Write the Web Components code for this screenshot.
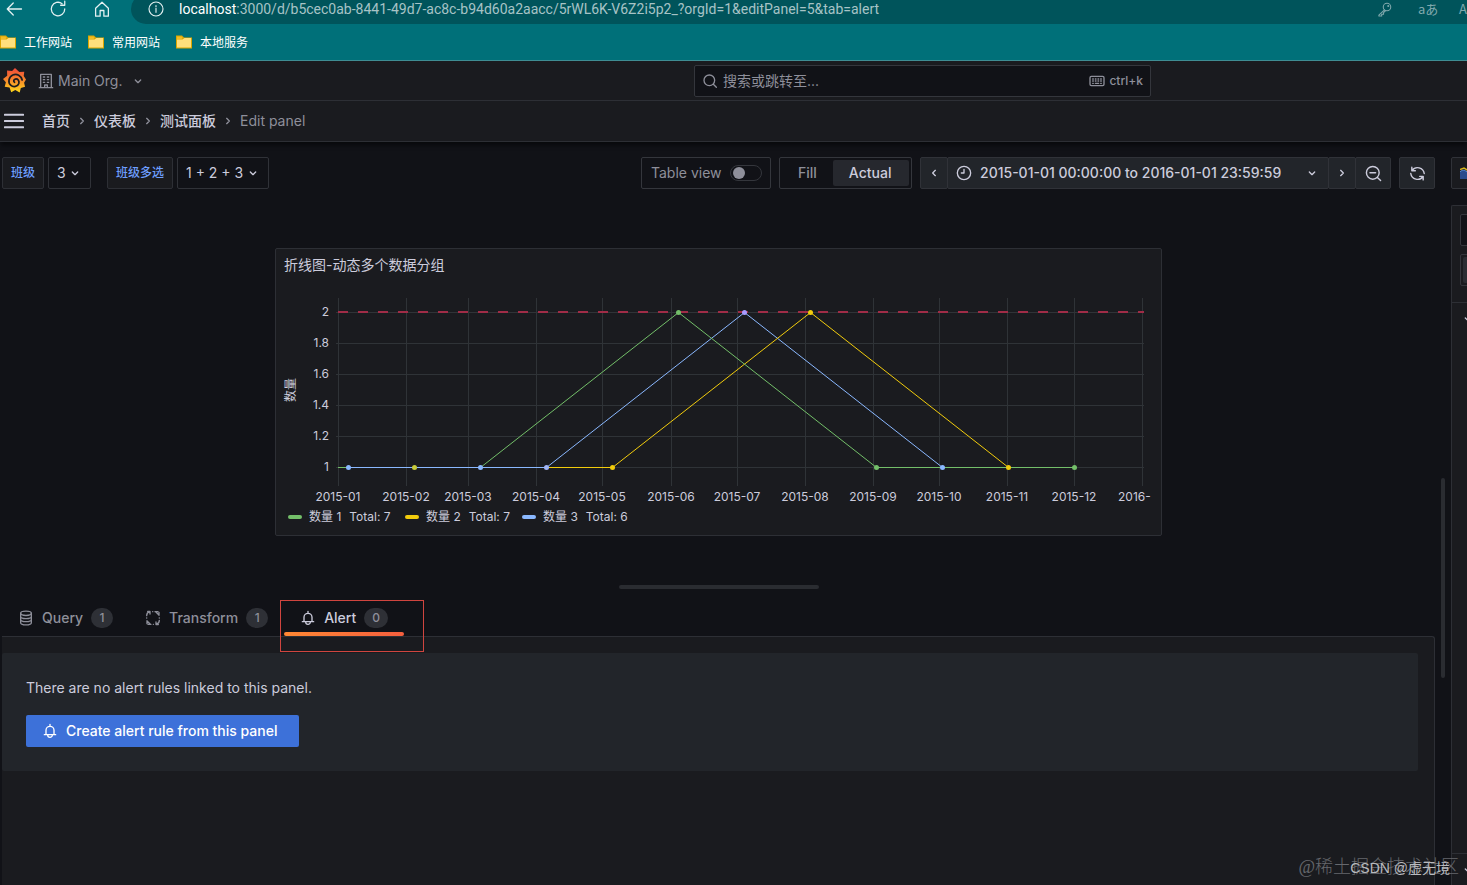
<!DOCTYPE html>
<html lang="zh-CN">
<head>
<meta charset="utf-8">
<title>Edit panel - 测试面板 - Grafana</title>
<style>
  html, body { height: 100%; }
  body {
    margin: 0; overflow: hidden; background: #111217; color: #ccccdc;
    font: 14px/22px Inter, "Noto Sans CJK SC", sans-serif;
    --panel: #1a1b1f; --raised: #22252a; --line: #2d2f35; --muted: #8e8f9a; --text: #ccccdc; --link: #6e9fff;
  }
</style>
</head>
<body>
<grafana-app></grafana-app>

<script>
const define = (name, html, setup) => {
  const template = document.createElement('template');
  template.innerHTML = html;
  customElements.define(name, class extends HTMLElement {
    constructor() {
      super();
      this.attachShadow({ mode: 'open' }).append(template.content.cloneNode(true));
    }
    connectedCallback() {
      if (setup && !this.ready) { this.ready = true; setup(this, this.shadowRoot); }
    }
  });
};

const BASE = `<style>
  *, *::before, *::after { box-sizing: border-box; }
  a { color: inherit; text-decoration: none; }
  button, input, select { font: inherit; color: inherit; margin: 0; }
</style>`;

/* ---------- icons, 24 unit grid ---------- */
const ICONS = {
  back: '<path d="M22 12H3M11 4l-8 8 8 8"/>',
  reload: '<path d="M21 12a9 9 0 1 1-3.500-7.100M21 1.500v5.500h-5.500"/>',
  home: '<path d="M3.500 11 12 3l8.500 8v10.500h-6V14h-5v7.500h-6z"/>',
  info: '<circle cx="12" cy="12" r="10.500"/><path d="M12 11v6M12 7v1.500"/>',
  key: '<circle cx="16" cy="8" r="6"/><path d="M12 12.500 3 21v1.500h4.500v-3h3V17l3-3"/><circle cx="18" cy="6.500" r=".8"/>',
  building: '<path d="M4 22V2h16v20M2 22h20M10 22v-4h4v4M8 6h2M14 6h2M8 10h2M14 10h2M8 14h2M14 14h2"/>',
  down: '<path d="m8 10.500 4 4 4-4"/>',
  right: '<path d="m10 8 4 4-4 4"/>',
  left: '<path d="m14 8-4 4 4 4"/>',
  search: '<circle cx="11" cy="11" r="8"/><path d="m17 17 4.500 4.500"/>',
  keyboard: '<rect x="1.500" y="5" width="21" height="14" rx="2"/><path d="M5.500 9h1M9.500 9h1M13.500 9h1M17.500 9h1M5.500 12h1M9.500 12h1M13.500 12h1M17.500 12h1M5.500 15.500h1M9.500 15.500h5M17.500 15.500h1"/>',
  clock: '<circle cx="12" cy="12" r="10"/><path d="M12 6.500V12H8"/>',
  zoomout: '<circle cx="11" cy="11" r="9"/><path d="m17.500 17.500 4.500 4.500M7 11h8"/>',
  sync: '<path d="M4 3v5h5M4.300 7.800A9.500 9.500 0 0 1 21.500 12M20 21v-5h-5M19.700 16.200A9.500 9.500 0 0 1 2.500 12"/>',
  database: '<ellipse cx="12" cy="5" rx="8" ry="3.200"/><path d="M4 5v14c0 1.800 3.600 3.200 8 3.200s8-1.400 8-3.200V5M4 9.700c0 1.800 3.600 3.200 8 3.200s8-1.400 8-3.200M4 14.300c0 1.800 3.600 3.200 8 3.200s8-1.400 8-3.200"/>',
  transform: '<path d="M2.500 8.500C2.500 5 4 3.200 7 2.500M7.500 6V2.300H4M15 2.500h4.500M16 2.500l4.500 4.500M21 3.500V8M21.500 15.500c0 3.500-1.500 5.300-4.500 6M16.500 18v3.700H20M9 21.500H4.500M8 21.500 3.500 17M3 20.500V16M2.500 12h.1M21.400 12h.1M11.500 2.500h.1M12.500 21.500h.1"/>',
  bell: '<path d="M12 2v2.500M3.500 17.500h17M6 17.500V11a6 6 0 0 1 12 0v6.500M8.500 18a3.500 3.500 0 0 0 7 0"/>',
  menu: '<path d="M1 4.500h22M1 12h22M1 19.500h22"/>'
};
define('ui-icon', `<style>
  :host { display: inline-block; flex: none; width: var(--size, 16px); height: var(--size, 16px); }
  svg { display: block; width: 100%; height: 100%; fill: none; stroke: currentColor; stroke-width: var(--stroke, 2); stroke-linecap: round; stroke-linejoin: round; }
</style><svg viewBox="0 0 24 24" aria-hidden="true"></svg>`,
  (host, root) => { root.querySelector('svg').innerHTML = ICONS[host.getAttribute('name')]; });

/* ---------- browser chrome ---------- */
define('bookmark-folder', `${BASE}<style>
  :host { display: block; }
  a { display: flex; align-items: center; gap: 8px; font: 12px/20px "Noto Sans CJK SC", sans-serif; color: #fff; }
  svg { width: 16px; height: 16px; display: block; }
</style><a href="#"><svg viewBox="0 0 16 16" aria-hidden="true"><path d="M0 1.500h6l2 2h8v11H0z" fill="#dba500"/><path d="M1 5.500h5.500l2-1.500H15v9.500H1z" fill="#ffdf7c"/><path d="M1 2.500h4.500l1.200 1.300L5.500 5H1z" fill="#f0bd25"/></svg><slot></slot></a>`);

define('browser-chrome', `${BASE}<style>
  :host { display: block; background: #007079; color: #e4f1f2; border-bottom: 1px solid #408e94; overflow: hidden; }
  .bar { display: flex; align-items: center; height: 30px; margin-top: -6px; }
  .nav { display: flex; gap: 26px; padding-left: 5px; width: 131px; --size: 18px; --stroke: 1.700; }
  button { padding: 0; border: 0; background: none; display: flex; }
  .url { flex: 1; min-width: 0; height: 100%; display: flex; align-items: center; background: #00545b; border-radius: 15px 0 0 15px; padding-left: 17px; --stroke: 1.700; }
  .url > ui-icon { --size: 16px; }
  .addr { flex: 1; padding-left: 15px; font: 14px/20px Roboto, sans-serif; color: #a7c3c6; white-space: nowrap; }
  .addr b { font-weight: 400; color: #fff; }
  .tools { display: flex; align-items: center; color: #80a9ad; font: 13px/20px "Noto Sans CJK SC", sans-serif; }
  .tools button { width: 41px; }
  .tools .last { width: 8px; }
  .tools ui-icon { --size: 15px; }
  nav { display: flex; gap: 16px; height: 36px; align-items: center; }
</style>
<div class="bar">
  <div class="nav">
    <button aria-label="Back"><ui-icon name="back"></ui-icon></button>
    <button aria-label="Reload"><ui-icon name="reload"></ui-icon></button>
    <button aria-label="Home"><ui-icon name="home"></ui-icon></button>
  </div>
  <div class="url">
    <ui-icon name="info"></ui-icon>
    <span class="addr"><b>localhost</b>:3000/d/b5cec0ab-8441-49d7-ac8c-b94d60a2aacc/5rWL6K-V6Z2i5p2_?orgId=1&amp;editPanel=5&amp;tab=alert</span>
    <div class="tools"><button aria-label="Password"><ui-icon name="key"></ui-icon></button><button>aあ</button><button class="last">A</button></div>
  </div>
</div>
<nav><bookmark-folder>工作网站</bookmark-folder><bookmark-folder>常用网站</bookmark-folder><bookmark-folder>本地服务</bookmark-folder></nav>`);

/* ---------- Grafana header ---------- */
define('grafana-logo', `<style>:host { display: block; } svg { display: block; width: 23px; height: 25px; }</style>
<svg viewBox="0 0 24 26" role="img" aria-label="Grafana"><defs><linearGradient id="g" x1="0" y1="1" x2="0" y2="0"><stop offset="0" stop-color="#ffd91a"/><stop offset=".5" stop-color="#f7882b"/><stop offset="1" stop-color="#f0483a"/></linearGradient></defs>
<path fill="url(#g)" d="M12.500 0 9.500 3.200 4.200 2.600 4.400 8 0 11.500l3 3.300L1.800 19.600l5 .8 1.800 4.800 4.200-2.400 4.600 2.600 1.200-4.600 4.400-1.200-1-4.200L24 12l-2.400-3.600.6-4.600-5.200.2z"/>
<path fill="none" stroke="#1a1c20" stroke-width="1.800" stroke-linecap="round" d="M20 12.500c-1-4.500-5.500-7-9.800-5.200-4.500 2-5.200 7.700-2.200 10.500 3 2.700 7.500 1.500 8.500-1.700.8-2.900-1.200-5.100-3.600-4.600-1.800.5-2.200 2.500-.9 3.300"/></svg>`);

define('app-header', `${BASE}<style>
  :host { display: block; background: var(--panel); position: relative; box-shadow: 0 4px 4px -1px #08090c; }
  .top { display: grid; grid-template-columns: 694fr 457fr 316fr; height: 40px; align-items: center; border-bottom: 1px solid var(--line); }
  .org { display: flex; align-items: center; padding-left: 3px; color: var(--muted); }
  .org button { display: flex; align-items: center; border: 0; background: none; padding: 0 0 0 12px; gap: 4px; font-size: 14px; }
  .org button ui-icon:last-child { margin-left: 4px; }
  .search { display: flex; align-items: center; height: 32px; padding: 0 7px; background: #111217; border: 1px solid #34363c; border-radius: 2px; color: var(--muted); }
  .search input { flex: 1; min-width: 0; border: 0; outline: 0; background: none; padding: 0 0 0 5px; }
  .search input::placeholder { color: var(--muted); opacity: 1; }
  kbd { display: flex; align-items: center; gap: 4px; font: 500 12px/18px Inter, sans-serif; }
  nav { display: flex; align-items: center; height: 41px; border-bottom: 1px solid var(--line); padding-left: 4px; }
  nav button { border: 0; background: none; padding: 0; margin-right: 18px; display: flex; --size: 20px; --stroke: 2.400; color: var(--text); }
  nav ui-icon { margin: 0 4px; color: var(--muted); }
  nav button ui-icon { margin: 0; color: var(--text); }
  nav a { font-weight: 500; }
  nav span { color: var(--muted); }
</style>
<div class="top">
  <div class="org"><grafana-logo></grafana-logo><button><ui-icon name="building"></ui-icon>Main Org. <ui-icon name="down"></ui-icon></button></div>
  <label class="search"><ui-icon name="search"></ui-icon><input type="text" placeholder="搜索或跳转至..." aria-label="搜索或跳转至..."><kbd><ui-icon name="keyboard"></ui-icon>ctrl+k</kbd></label>
</div>
<nav aria-label="Breadcrumbs"><button aria-label="Menu"><ui-icon name="menu"></ui-icon></button><a href="#">首页</a><ui-icon name="right"></ui-icon><a href="#">仪表板</a><ui-icon name="right"></ui-icon><a href="#">测试面板</a><ui-icon name="right"></ui-icon><span>Edit panel</span></nav>`);

/* ---------- toolbar ---------- */
define('variable-picker', `${BASE}<style>
  :host { display: flex; gap: 4px; height: 32px; }
  label { display: flex; align-items: center; padding: 0 8px; background: var(--panel); border: 1px solid var(--line); border-radius: 2px; font-size: 12px; font-weight: 500; color: var(--link); white-space: nowrap; }
  .box { display: grid; align-items: center; }
  select, ui-icon { grid-area: 1 / 1; }
  select { appearance: none; height: 32px; background: #111217; border: 1px solid #303238; border-radius: 2px; padding: 0 24px 0 8px; width: 100%; }
  ui-icon { justify-self: end; margin-right: 8px; pointer-events: none; }
</style><label for="v"></label><div class="box"><select id="v"><option></option></select><ui-icon name="down"></ui-icon></div>`,
  (host, root) => {
    root.querySelector('label').textContent = host.getAttribute('label');
    root.querySelector('option').textContent = host.getAttribute('value');
  });

define('edit-toolbar', `${BASE}<style>
  :host { display: flex; justify-content: space-between; height: 32px; }
  .vars { display: flex; gap: 16px; }
  .actions { display: flex; gap: 8px; }
  .view { display: flex; align-items: center; justify-content: space-between; min-width: 130px; padding: 0 8px 0 9px; border: 1px solid #34363c; border-radius: 2px; color: var(--muted); }
  .view input { appearance: none; width: 32px; height: 16px; border-radius: 8px; border: 1px solid #34363c; display: flex; align-items: center; padding-left: 2px; }
  .view input::before { content: ""; width: 12px; height: 12px; border-radius: 6px; background: var(--muted); }
  fieldset { display: flex; margin: 0; padding: 2px; min-width: 133px; border: 1px solid #34363c; border-radius: 2px; }
  fieldset label { display: flex; align-items: center; padding: 0 16px; color: var(--muted); border-radius: 2px; font-weight: 500; position: relative; }
  fieldset label.on { flex: 1; background: #26282e; color: var(--text); }
  fieldset input { position: absolute; opacity: 0; }
  .group { display: flex; }
  button { display: flex; align-items: center; justify-content: center; height: 32px; background: var(--raised); border: 1px solid #303238; border-radius: 2px; padding: 0; font-weight: 500; white-space: nowrap; --size: 16px; }
  .group button + button { border-left-color: #303238; margin-left: -1px; }
  .step { width: 28px; }
  .sq { width: 36px; --size: 17px; }
  .range { min-width: 382px; padding: 0 8px; gap: 8px; }
  .range ui-icon:last-child { margin-left: auto; }
</style>
<div class="vars"><variable-picker label="班级" value="3"></variable-picker><variable-picker label="班级多选" value="1 + 2 + 3"></variable-picker></div>
<div class="actions">
  <label class="view">Table view<input type="checkbox"></label>
  <fieldset aria-label="Size"><label><input type="radio" name="s">Fill</label><label class="on"><input type="radio" name="s" checked>Actual</label></fieldset>
  <div class="group">
    <button class="step" aria-label="Back in time"><ui-icon name="left"></ui-icon></button>
    <button class="range"><ui-icon name="clock"></ui-icon>2015-01-01 00:00:00 to 2016-01-01 23:59:59 <ui-icon name="down"></ui-icon></button>
    <button class="step" aria-label="Forward in time"><ui-icon name="right"></ui-icon></button>
    <button class="sq" aria-label="Zoom out"><ui-icon name="zoomout"></ui-icon></button>
  </div>
  <button class="sq" aria-label="Refresh"><ui-icon name="sync"></ui-icon></button>
</div>`);

/* ---------- chart panel ---------- */
define('legend-item', `<style>
  :host { display: flex; align-items: center; min-width: 107px; }
  i { width: 14px; height: 4px; border-radius: 2px; background: var(--c); margin-right: 7px; }
  span { margin-left: 8px; }
</style><i></i><slot></slot><span></span>`,
  (host, root) => { root.querySelector('span').textContent = 'Total: ' + host.getAttribute('total'); });

define('time-series-panel', `${BASE}<style>
  :host { display: block; width: min(100%, 887px); background: var(--panel); border: 1px solid var(--line); border-radius: 2px; }
  h2 { margin: 0; padding: 0 8px; font: 14px/32px Inter, "Noto Sans CJK SC", sans-serif; }
  svg { display: block; width: 100%; font: 12px Inter, "Noto Sans CJK SC", sans-serif; fill: #ccccdc; }
  .grid path { stroke: #2f3337; }
  .series polyline { fill: none; stroke-width: 1; }
  .legend { display: flex; gap: 10px; padding: 0 12px 8px; font-size: 12px; line-height: 20px; }
</style>
<h2>折线图-动态多个数据分组</h2>
<svg viewBox="0 0 885 226" role="img" aria-label="数量"><g class="grid"></g><g class="labels"></g>
<path d="M62 31H868" stroke="#a02c47" stroke-width="2" stroke-dasharray="10 10"/><g class="series"></g></svg>
<div class="legend">
  <legend-item total="7" style="--c:#73bf69">数量 1</legend-item>
  <legend-item total="7" style="--c:#f2cc0c">数量 2</legend-item>
  <legend-item total="6" style="--c:#8ab8ff">数量 3</legend-item>
</div>`,
  (host, root) => {
    const ticks = [62, 130, 192, 260, 326, 395, 461, 529, 597, 663, 731, 798, 866];
    const y = v => 186.5 - (v - 1) * 155;
    const x = month => 72.5 + 66 * (month - 1);
    let grid = '', labels = '';
    ticks.forEach((t, i) => {
      grid += `<path d="M${t + .5} 17V205"/>`;
      labels += i < 12
        ? `<text x="${t}" y="220" text-anchor="middle">2015-${String(i + 1).padStart(2, '0')}</text>`
        : `<text x="842" y="220">2016-</text>`;
    });
    [1, 1.2, 1.4, 1.6, 1.8, 2].forEach(v => {
      grid += `<path d="M60 ${y(v)}H868"/>`;
      labels += `<text x="53" y="${Math.floor(y(v)) + 4}" text-anchor="end">${v}</text>`;
    });
    labels += '<text transform="translate(19 109) rotate(-90)" text-anchor="middle">数量</text>';
    const green = '#73bf69', yellow = '#f2cc0c', blue = '#8ab8ff';
    const line = (c, points) => `<polyline stroke="${c}" points="${points.map(([m, v]) => x(m) + ',' + y(v)).join(' ')}"/>`;
    const dot = (c, m, v) => `<circle cx="${x(m)}" cy="${y(v)}" r="2.5" fill="${c}"/>`;
    root.querySelector('.grid').innerHTML = grid;
    root.querySelector('.labels').innerHTML = labels;
    root.querySelector('.series').innerHTML =
      `<path d="M62 186.500H73" stroke="${green}"/>` +
      line(blue, [[1, 1], [4, 1], [7, 2], [10, 1]]) +
      line(yellow, [[4, 1], [5, 1], [8, 2], [11, 1]]) +
      line(green, [[3, 1], [6, 2], [9, 1], [12, 1]]) +
      [[blue, 1, 1], ['#c8cc3a', 2, 1], [blue, 3, 1], ['#a0b4f5', 4, 1], [yellow, 5, 1], [green, 6, 2], ['#a99bff', 7, 2],
       [yellow, 8, 2], [green, 9, 1], [blue, 10, 1], [yellow, 11, 1], [green, 12, 1]].map(d => dot(...d)).join('');
  });

/* ---------- tabs and alert content ---------- */
define('editor-tab', `${BASE}<style>
  :host { display: block; position: relative; color: var(--muted); font-weight: 500; }
  :host([active]) { color: var(--text); }
  a { display: flex; align-items: center; gap: 8px; height: 36px; padding: 0 16px; }
  .count { min-width: 22px; height: 20px; border-radius: 10px; padding: 0 8px; background: #2e3036; color: var(--muted); font-size: 12px; line-height: 20px; text-align: center; }
  :host([active]) a::after { content: ""; position: absolute; left: 0; right: 0; bottom: 0; height: 4px; border-radius: 2px; background: linear-gradient(90deg, #ff8833, #f55f3e); }
  :host([marked])::before { content: ""; position: absolute; inset: 0 -20px -16px -4px; border: 1px solid #d0453f; pointer-events: none; }
</style><a href="#"><ui-icon></ui-icon><slot></slot><span class="count"></span></a>`,
  (host, root) => {
    const icon = document.createElement('ui-icon');
    icon.setAttribute('name', host.getAttribute('icon'));
    root.querySelector('ui-icon').replaceWith(icon);
    root.querySelector('.count').textContent = host.getAttribute('count');
  });

define('alert-view', `${BASE}<style>
  :host { display: block; flex: 1; background: var(--panel); border: solid var(--line); border-width: 1px 1px 0 0; border-radius: 0 3px 0 0; padding: 16px 16px 0 0; }
  section { background: var(--raised); border-radius: 2px; padding: 24px; display: flex; flex-direction: column; align-items: flex-start; gap: 16px; }
  p { margin: 0; }
  button { display: flex; align-items: center; gap: 8px; height: 32px; min-width: 273px; padding: 0 16px; border: 0; border-radius: 2px; background: #3d71d9; color: #fff; font-weight: 500; }
</style><section><p>There are no alert rules linked to this panel.</p><button><ui-icon name="bell"></ui-icon>Create alert rule from this panel</button></section>`);

/* ---------- options pane, running off the right edge ---------- */
define('options-pane', `${BASE}<style>
  :host { display: flex; flex-direction: column; overflow: hidden; padding-top: 15px; }
  .viz { flex: none; display: flex; align-items: center; width: 200px; height: 32px; padding: 0 8px; background: var(--panel); border: 1px solid #303238; border-radius: 2px; }
  .viz svg { width: 16px; height: 16px; }
  .pane { flex: 1; width: 200px; margin-top: 16px; display: flex; flex-direction: column; background: var(--panel); border: solid var(--line); border-width: 1px 0 0 1px; border-radius: 2px 0 0 0; }
  input { height: 32px; margin: 8px; border: 1px solid #34363c; border-radius: 2px; background: #111217; }
  .seg { height: 32px; margin: 0 8px 16px; padding: 2px; border: 1px solid #34363c; border-radius: 2px; }
  .seg button { display: block; width: 90px; height: 26px; border: 0; background: #2b2d33; border-radius: 2px; }
  .row { height: 32px; border-top: 1px solid var(--line); display: flex; align-items: center; padding-left: 8px; }
  .row:last-child { margin-top: auto; }
</style>
<button class="viz" aria-label="Visualization"><svg viewBox="0 0 16 16"><path d="M0 7c2-2.500 5-2.500 8 1l4-2 4 2v6H0z" fill="#2a4a8c"/><path d="M0 4.500 4 3l4 2.500 4-3" fill="none" stroke="#d9b61c" stroke-width="1.500"/><path d="M0 7c2-2.500 5-2.500 8 1" fill="none" stroke="#5b8fe0"/></svg></button>
<div class="pane"><input type="text" aria-label="Search options"><div class="seg"><button aria-label="All"></button></div><div class="row"><ui-icon name="down"></ui-icon></div><div class="row"><ui-icon name="down"></ui-icon></div></div>`);

define('grafana-app', `${BASE}<style>
  :host { display: flex; flex-direction: column; height: 100vh; position: relative; overflow: hidden; }
  main { flex: 1; min-height: 0; display: grid; grid-template-columns: minmax(0, 1fr) 16px 16px; }
  .editor { display: flex; flex-direction: column; padding: 15px 0 0 2px; min-height: 0; }
  time-series-panel { margin: 59px auto 49px; }
  .splitter { width: 200px; height: 4px; border-radius: 2px; background: #2a2c31; margin: 0 auto 11px; flex: none; }
  .tabs { display: flex; flex: none; }
  .gutter { padding: 336px 6px 0; }
  .thumb { width: 4px; height: 200px; border-radius: 2px; background: #2a2c31; }
  .mark { position: absolute; pointer-events: none; white-space: nowrap; }
  .site { right: 8px; bottom: 5px; font: 300 18px/26px "Liberation Serif", "Noto Sans CJK SC", serif; color: #66686d; }
  .author { right: 17px; bottom: 6px; font: 14px/22px "Liberation Sans", "Noto Sans CJK SC", sans-serif; color: #b9babe; }
</style>
<browser-chrome></browser-chrome>
<app-header></app-header>
<main>
  <div class="editor">
    <edit-toolbar></edit-toolbar>
    <time-series-panel></time-series-panel>
    <div class="splitter"></div>
    <div class="tabs">
      <editor-tab icon="database" count="1">Query</editor-tab>
      <editor-tab icon="transform" count="1">Transform</editor-tab>
      <editor-tab icon="bell" count="0" active marked>Alert</editor-tab>
    </div>
    <alert-view></alert-view>
  </div>
  <div class="gutter"><div class="thumb"></div></div>
  <options-pane></options-pane>
</main>
<div class="mark site">@稀土掘金技术社区</div>
<div class="mark author">CSDN @虚无境</div>`);
</script>
</body>
</html>
